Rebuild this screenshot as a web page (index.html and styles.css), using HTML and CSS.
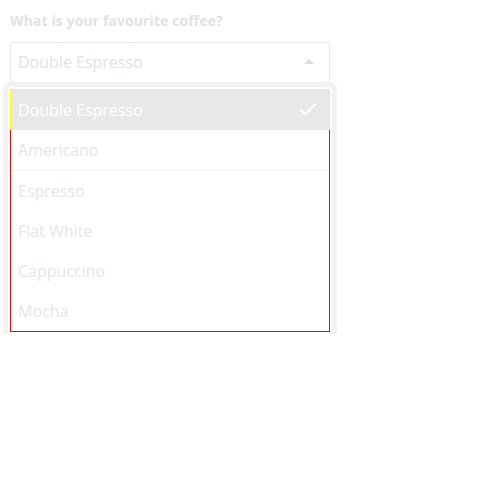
FILE: index.html
```html
<!DOCTYPE html>
<html>
<head>
<meta charset="utf-8">
<link rel="stylesheet" href="styles.css">
</head>
<body>
<div class="field">
  <div class="label">What is your favourite coffee?</div>
  <div class="select">
    <span class="value">Double Espresso</span>
    <span class="caret"></span>
  </div>
  <div class="menu">
    <div class="list">
      <div class="option selected">
        <span>Double Espresso</span>
        <svg class="check" width="18" height="14" viewBox="0 0 18 14"><path d="M1.5 6.5 L6 11.5 L16.5 1" fill="none" stroke="#ffffff" stroke-width="2.2"/></svg>
      </div>
      <div class="option">Americano</div>
      <div class="option sep">Espresso</div>
      <div class="option">Flat White</div>
      <div class="option">Cappuccino</div>
      <div class="option">Mocha</div>
    </div>
  </div>
</div>
</body>
</html>
```
FILE: styles.css
```css
html, body {
  margin: 0;
  padding: 0;
  background: #ffffff;
}
body {
  font-family: "Open Sans", "Liberation Sans", sans-serif;
}
.field {
  padding: 11px 10px 0 10px;
  width: 320px;
}
.label {
  font-size: 14px;
  font-weight: 700;
  line-height: 20px;
  color: #e2e2e2;
  margin-bottom: 11px;
  letter-spacing: 0.1px;
}
.select {
  box-sizing: border-box;
  height: 41px;
  border: 1px solid #e8e8e8;
  border-radius: 3px;
  display: flex;
  align-items: center;
  justify-content: space-between;
  padding: 0 15px 0 7px;
}
.value {
  font-size: 16px;
  line-height: 22px;
  color: #e2e2e2;
  margin-top: -1px;
}
.caret {
  width: 0;
  height: 0;
  border-left: 5px solid transparent;
  border-right: 5px solid transparent;
  border-bottom: 5px solid #dcdcdc;
  margin-top: -2px;
}
.menu {
  margin: 4px -2px 0 -2px;
  background-color: #ffffff;
  border-radius: 3px;
  box-shadow: 0 0 0 5px #f2f2f2;
  padding: 2px;
}
.list {
  border: 1px solid #ff0000;
  border-top-color: #ffff00;
  background-color: #ffffff;
}
.option {
  height: 40px;
  box-sizing: border-box;
  display: flex;
  align-items: center;
  justify-content: space-between;
  padding: 0 12px 0 7px;
  font-size: 16px;
  color: #e6e6e6;
}
.option.selected {
  background-color: #e8e8e8;
  color: #ffffff;
  margin: -1px -1px 0 -1px;
  height: 41px;
  border: 1px solid #ffff00;
  border-bottom: 0;
}
.option.sep {
  height: 41px;
  border-top: 1px solid #f0f0f0;
}
.check {
  display: block;
}
```
